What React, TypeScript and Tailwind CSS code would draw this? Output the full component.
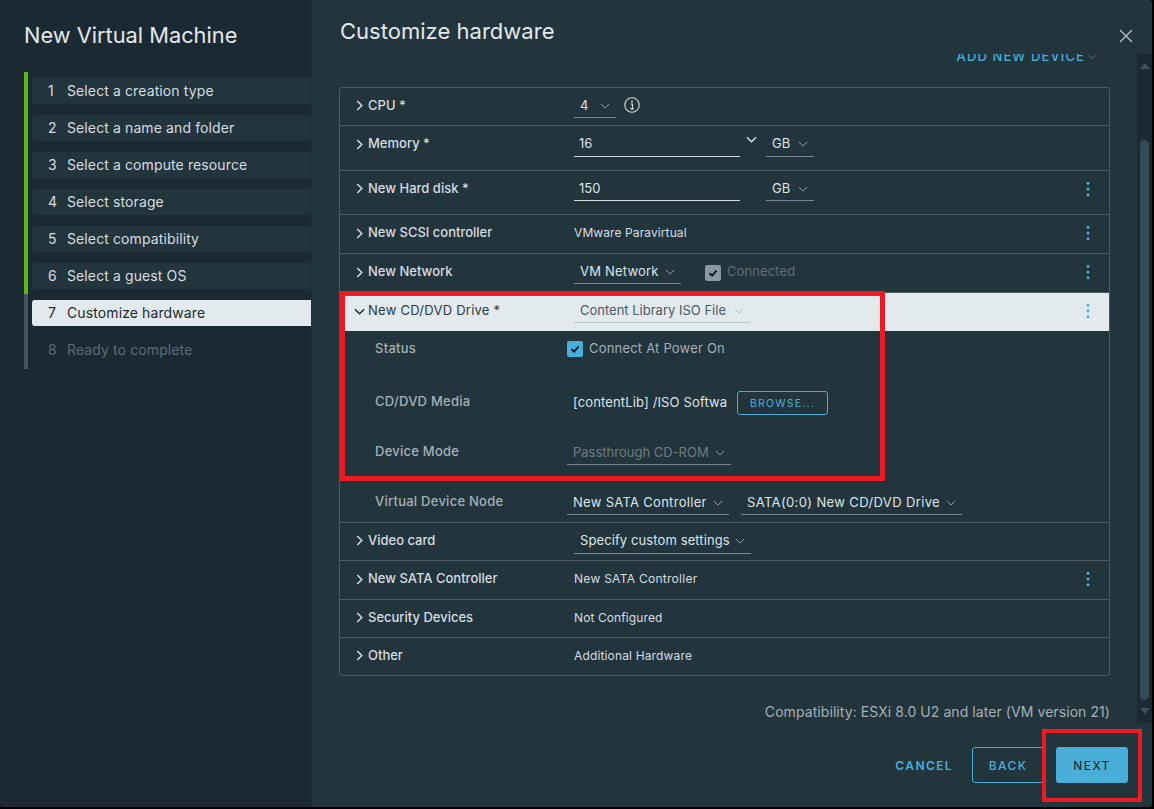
import React from "react";

const steps = [
  "Select a creation type",
  "Select a name and folder",
  "Select a compute resource",
  "Select storage",
  "Select compatibility",
  "Select a guest OS",
  "Customize hardware",
  "Ready to complete",
];

function Chev({ dir = "down", className = "", sw = 1 }: { dir?: "down" | "right"; className?: string; sw?: number }) {
  return (
    <svg viewBox="0 0 12 12" fill="none" stroke="currentColor" strokeWidth={sw} className={className}>
      {dir === "down" ? <path d="M1 3.5 L6 8.5 L11 3.5" /> : <path d="M3.5 1 L8.5 6 L3.5 11" />}
    </svg>
  );
}

function Kebab() {
  return (
    <svg viewBox="0 0 6 16" className="w-[6px] h-[16px] text-[#49afd9]" fill="currentColor">
      <circle cx="3" cy="2.2" r="1.5" />
      <circle cx="3" cy="8" r="1.5" />
      <circle cx="3" cy="13.8" r="1.5" />
    </svg>
  );
}

function Check({ className = "" }: { className?: string }) {
  return (
    <svg viewBox="0 0 16 16" fill="none" stroke="currentColor" strokeWidth="2.2" className={className}>
      <path d="M4 8.2 L7 11 L12 5.2" />
    </svg>
  );
}

function Select({ text, className, textClass = "text-[#dfe4e7]" }: { text: string; className: string; textClass?: string }) {
  return (
    <div className={`flex items-center justify-between border-b border-[#7b8a91] h-[24px] pl-[6px] pr-[6px] ${className}`}>
      <span className={`text-[13px] whitespace-nowrap ${textClass}`}>{text}</span>
      <Chev dir="down" className="w-[10px] h-[10px] text-[#a9b4ba] shrink-0" />
    </div>
  );
}

function Row({
  label,
  h,
  children,
  kebab,
  last,
}: {
  label: string;
  h: string;
  children?: React.ReactNode;
  kebab?: boolean;
  last?: boolean;
}) {
  return (
    <div className={`flex items-center ${h} ${last ? "" : "border-b border-[#4a5b63]"}`}>
      <Chev dir="right" sw={1.6} className="w-[11px] h-[11px] ml-[14px] mr-[3px] text-[#d7dde0] shrink-0" />
      <div className="w-[206px] shrink-0 text-[13px] font-medium text-[#d7dde0] whitespace-nowrap">{label}</div>
      <div className="flex items-center flex-1 min-w-0">{children}</div>
      {kebab && (
        <div className="mr-[18px] flex items-center">
          <Kebab />
        </div>
      )}
    </div>
  );
}

function Sub({ label, className, children }: { label: string; className: string; children: React.ReactNode }) {
  return (
    <div className={`flex items-center ${className}`}>
      <div className="w-[227px] pl-[35px] shrink-0 text-[13px] font-medium tracking-[0.25px] text-[#a6b0b5] whitespace-nowrap">{label}</div>
      {children}
    </div>
  );
}

export default function App() {
  return (
    <div
      className="relative w-[1154px] h-[809px] bg-black overflow-hidden"
      style={{ fontFamily: "Inter, 'Noto Sans', sans-serif" }}
    >
      <div className="flex w-[1152px] h-[807px] rounded-[3px] overflow-hidden bg-[#22343c]">
        {/* sidebar */}
        <aside className="w-[312px] shrink-0 bg-[#1b2a32] border-r border-[#1f2f37] pl-[24px] flex flex-col">
          <h1 className="text-[21.8px] leading-[28px] mt-[21px] text-[#e3e8eb] font-normal whitespace-nowrap">
            New Virtual Machine
          </h1>
          <div className="mt-[23px] flex flex-col">
            {steps.map((s, i) => {
              const active = i === 6;
              const todo = i === 7;
              return (
                <div
                  key={s}
                  className={`flex border-l-[4px] ${i === 7 ? "h-[38px]" : "h-[37px]"} ${i < 6 ? "border-[#5eb715]" : "border-[#46555c]"}`}
                >
                  <div
                    className={`ml-[4px] mt-[6px] pb-[2px] w-[279px] h-[26px] rounded-l-[3px] flex items-center text-[14px] tracking-[0.11px] ${
                      active
                        ? "bg-[#e3eaed] text-[#1b2a32]"
                        : todo
                          ? "text-[#5c6b72]"
                          : "bg-[#22343c] text-[#d7dde0]"
                    }`}
                  >
                    <span className="w-[35px] pl-[16px] text-[14px]">{i + 1}</span>
                    <span className="whitespace-nowrap">{s}</span>
                  </div>
                </div>
              );
            })}
          </div>
        </aside>

        {/* main */}
        <main className="flex-1 min-w-0 flex flex-col relative">
          <header className="h-[54px] shrink-0 pl-[28px] flex items-start">
            <h2 className="text-[22px] leading-[28px] mt-[17px] text-[#e3e8eb] font-normal tracking-[0.02px] whitespace-nowrap">
              Customize hardware
            </h2>
            <svg viewBox="0 0 14 14" className="absolute right-[19px] top-[29px] w-[14px] h-[14px] text-[#b9c3c8]" fill="none" stroke="currentColor" strokeWidth="1.3">
              <path d="M1 1 L13 13 M13 1 L1 13" />
            </svg>
          </header>

          <div className="flex h-[669px] shrink-0">
            <div className="flex-1 min-w-0 overflow-hidden pl-[27px] pr-[27px]">
              <div className="-mt-[17px] h-[40px] flex items-center justify-end pr-[14px] text-[#49afd9] text-[13px] font-medium tracking-[1.1px] whitespace-nowrap">
                <span>ADD NEW DEVICE</span>
                <Chev dir="down" className="w-[8px] h-[8px] ml-[3px]" />
              </div>
              <div className="mt-[10px] border border-[#4a5b63] rounded-[3px]">
                <Row label="CPU *" h="h-[38px] pb-[2px]">
                  <Select text="4" className="w-[42px] mt-[1px]" />
                  <svg viewBox="0 0 16 16" className="w-[16px] h-[16px] ml-[8px] mb-[2px] text-[#d7dde0]" fill="none" stroke="currentColor">
                    <circle cx="8" cy="8" r="7.2" strokeWidth="1.1" />
                    <circle cx="8" cy="4.6" r="1" fill="currentColor" stroke="none" />
                    <path d="M6.5 7 H8.4 V11.6 M6.3 11.8 H10" strokeWidth="1.2" />
                  </svg>
                </Row>
                <Row label="Memory *" h="h-[45px] pb-[8px]">
                  <div className="w-[166px] h-[26px] mb-[1px] pt-[2px] border-b border-[#d7dde0] pl-[5px] text-[13px] text-[#dfe4e7] flex items-center">16</div>
                  <Chev dir="down" sw={1.6} className="w-[11px] h-[11px] ml-[6px] mb-[10px] text-[#d7dde0]" />
                  <Select text="GB" className="w-[48px] ml-[9px] mt-[1px]" />
                </Row>
                <Row label="New Hard disk *" h="h-[44px] pb-[8px]" kebab>
                  <div className="w-[166px] h-[26px] mb-[1px] pt-[2px] border-b border-[#d7dde0] pl-[5px] text-[13px] text-[#dfe4e7] flex items-center">150</div>
                  <Select text="GB" className="w-[48px] ml-[26px] mt-[1px]" />
                </Row>
                <Row label="New SCSI controller" h="h-[39px] pb-[2px]" kebab>
                  <span className="text-[12px] tracking-[0.1px] text-[#d7dde0]">VMware Paravirtual</span>
                </Row>
                <Row label="New Network" h="h-[39px] pb-[2px]" kebab>
                  <Select text="VM Network" className="w-[107px]" textClass="text-[#dfe4e7] tracking-[0.2px]" />
                  <span className="ml-[24px] mt-[2px] w-[16px] h-[16px] rounded-[2px] bg-[#8a989f] flex items-center justify-center">
                    <Check className="w-[14px] h-[14px] text-[#0f1a20]" />
                  </span>
                  <span className="ml-[6px] text-[13px] tracking-[0.1px] text-[#5f6f77]">Connected</span>
                </Row>
                <div className="flex items-center h-[38px] pb-[2px] bg-[#e3eaed]">
                  <Chev dir="down" sw={1.6} className="w-[11px] h-[11px] ml-[14px] mr-[3px] text-[#1b2a32] shrink-0" />
                  <div className="w-[206px] shrink-0 text-[13px] tracking-[0.25px] text-[#2b3b43] whitespace-nowrap">New CD/DVD Drive *</div>
                  <Select text="Content Library ISO File" className="w-[176px] !border-[#b9c3c8]" textClass="text-[#4a5b63]" />
                  <div className="ml-auto mr-[18px] flex items-center">
                    <Kebab />
                  </div>
                </div>
                <div className="h-[192px] border-b border-[#4a5b63] flex flex-col">
                  <Sub label="Status" className="h-[35px]">
                    <span className="w-[16px] h-[16px] rounded-[2px] bg-[#49afd9] flex items-center justify-center">
                      <Check className="w-[14px] h-[14px] text-[#0f1a20]" />
                    </span>
                    <span className="ml-[6px] text-[13px] tracking-[0.2px] text-[#a6b0b5]">Connect At Power On</span>
                  </Sub>
                  <Sub label="CD/DVD Media" className="h-[50px] mt-[11px]">
                    <div className="w-[154px] ml-[6px] whitespace-nowrap text-[13px] tracking-[0.14px] text-[#dfe4e7] pt-[2px]">
                      [contentLib] /ISO Softwa
                    </div>
                    <button className="ml-[10px] w-[91px] h-[24px] mt-[2px] pt-[1px] rounded-[3px] border border-[#49afd9] text-[#49afd9] text-[10.5px] tracking-[1.2px]">
                      BROWSE...
                    </button>
                  </Sub>
                  <Sub label="Device Mode" className="h-[50px]">
                    <Select text="Passthrough CD-ROM" className="w-[164px] mt-[2px]" textClass="text-[#6d7c83]" />
                  </Sub>
                  <Sub label="Virtual Device Node" className="h-[45px] pt-[5px]">
                    <Select text="New SATA Controller" className="w-[162px] mt-[2px]" textClass="text-[#dfe4e7] tracking-[0.3px]" />
                    <Select text="SATA(0:0) New CD/DVD Drive" className="w-[221px] ml-[12px] mt-[2px]" textClass="text-[#dfe4e7] tracking-[0.37px]" />
                  </Sub>
                </div>
                <Row label="Video card" h="h-[38px] pb-[2px]">
                  <Select text="Specify custom settings" className="w-[177px] mt-[2px]" textClass="text-[#dfe4e7] tracking-[0.1px]" />
                </Row>
                <Row label="New SATA Controller" h="h-[39px] pb-[2px]" kebab>
                  <span className="text-[12px] tracking-[0.28px] text-[#d7dde0]">New SATA Controller</span>
                </Row>
                <Row label="Security Devices" h="h-[38px] pb-[2px]">
                  <span className="text-[12px] tracking-[0.1px] text-[#d7dde0]">Not Configured</span>
                </Row>
                <Row label="Other" h="h-[37px] pb-[2px]" last>
                  <span className="text-[12px] tracking-[0.15px] text-[#d7dde0]">Additional Hardware</span>
                </Row>
              </div>
              <div className="mt-[25px] text-right text-[14px] tracking-[0.07px] text-[#a6b0b5] whitespace-nowrap">
                Compatibility: ESXi 8.0 U2 and later (VM version 21)
              </div>
            </div>
            {/* scrollbar */}
            <div className="w-[15px] shrink-0 bg-[#1b2a32] flex flex-col items-center">
              <svg viewBox="0 0 10 6" className="w-[10px] h-[6px] mt-[9px] text-[#3f525b]" fill="currentColor">
                <path d="M5 0 L10 6 H0 Z" />
              </svg>
              <div className="w-[9px] h-[560px] mt-[71px] rounded-[5px] bg-[#354b56]" />
              <svg viewBox="0 0 10 6" className="w-[10px] h-[6px] mt-[8px] text-[#3f525b]" fill="currentColor">
                <path d="M5 6 L10 0 H0 Z" />
              </svg>
            </div>
          </div>

          <footer className="flex-1 flex items-start justify-end pt-[24px] pr-[24px]">
            <button className="h-[36px] pt-[2px] text-[#49afd9] text-[12px] font-semibold tracking-[1.4px] mr-[19px]">CANCEL</button>
            <button className="h-[36px] pt-[2px] w-[72px] rounded-[3px] border border-[#49afd9] text-[#49afd9] text-[12px] font-medium tracking-[1.4px] mr-[12px]">BACK</button>
            <button className="h-[36px] pt-[2px] w-[72px] rounded-[3px] bg-[#49afd9] text-[#0f1a20] text-[12px] font-normal tracking-[1.4px]">NEXT</button>
          </footer>
        </main>
      </div>

      {/* annotation boxes */}
      <div className="absolute left-[340px] top-[291px] w-[545px] h-[190px] border-[5px] border-[#ed1c24] pointer-events-none" />
      <div className="absolute left-[1042px] top-[729px] w-[100px] h-[73px] border-[4px] border-[#ed1c24] pointer-events-none" />
    </div>
  );
}
